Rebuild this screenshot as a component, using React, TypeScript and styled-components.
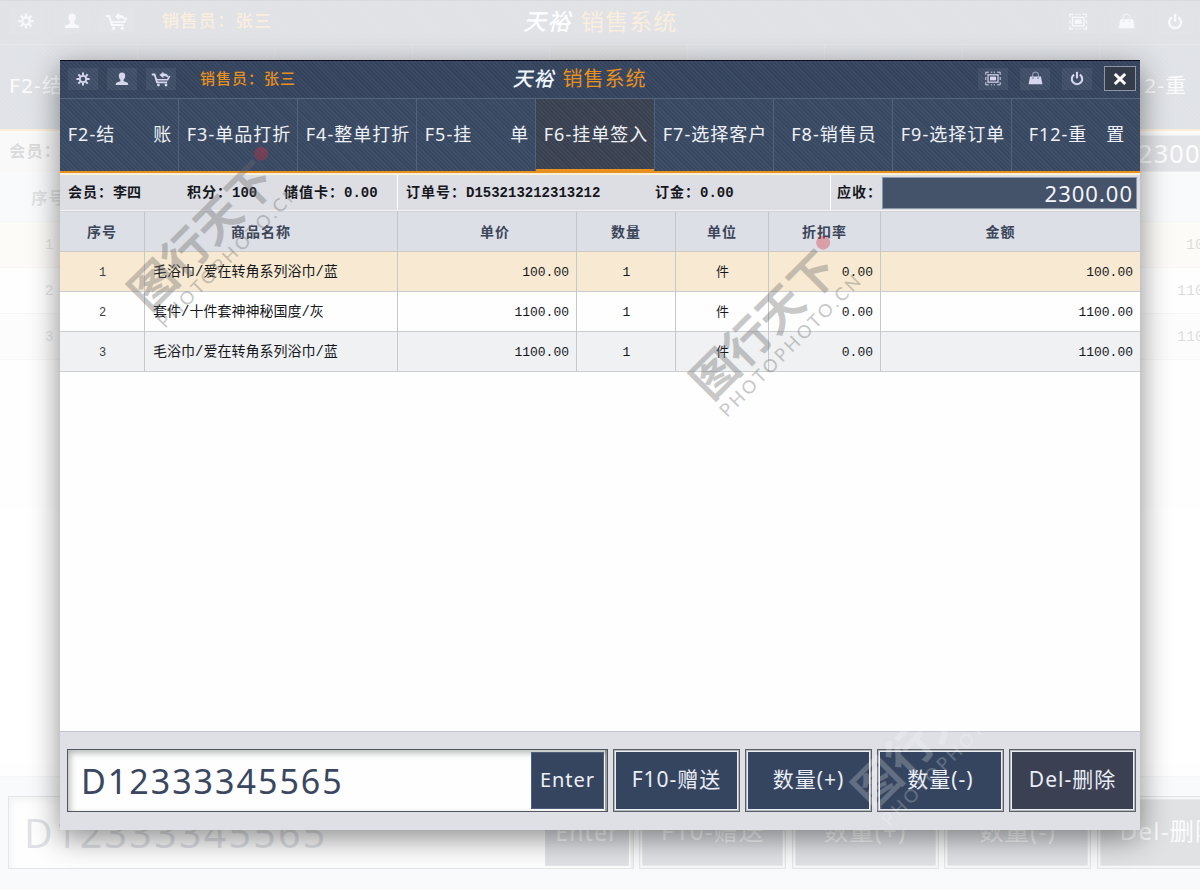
import React, { useId } from 'react';
import styled, { createGlobalStyle, css } from 'styled-components';

const navy = '#36455f';
const orange = '#e8901e';
const sans = `"Noto Sans", "Noto Sans CJK SC", sans-serif`;
const mono = `"Liberation Mono", "Noto Sans CJK SC", monospace`;

const weave = css`
  background-image: repeating-linear-gradient(
    45deg,
    rgba(255, 255, 255, 0.03) 0 1px,
    rgba(0, 0, 0, 0.04) 2px 3px
  );
`;

const GlobalStyle = createGlobalStyle`
  *, *::before, *::after { box-sizing: border-box; }
  body { margin: 0; background: #fff; font-family: ${sans}; overflow: hidden; }
  button, input { font-family: inherit; margin: 0; }
`;

const Stage = styled.main`
  position: relative;
  min-height: 100vh;
  padding: 60px;
  overflow: hidden;
  display: flex;
`;

const Backdrop = styled.div`
  position: absolute;
  inset: 0 auto 0 0;
  width: 104%;
  display: flex;
  opacity: 0.15;
`;

const Front = styled.div`
  position: relative;
  flex: 1;
  min-width: 0;
  display: flex;
  box-shadow: 0 8px 28px rgba(0, 0, 0, 0.46);
`;

const Shell = styled.section<{ $zoom: number }>`
  zoom: ${(p) => p.$zoom};
  flex: 1;
  min-width: 0;
  display: flex;
  flex-direction: column;
  background: #fefefe;
`;

const TopBar = styled.header`
  ${weave}
  background-color: ${navy};
  border-top: 1px solid #0b0f18;
  height: 38px;
  display: flex;
  align-items: center;
  padding: 0 4px 2px 8px;
`;

const TopLeft = styled.div`
  flex: 0 0 42%;
  margin-right: -4px;
  display: flex;
  align-items: center;
  gap: 9px;
`;

const TopRight = styled.div`
  margin-left: auto;
  display: flex;
  align-items: center;
  gap: 12px;
`;

const IconButton = styled.button`
  width: 30px;
  height: 22px;
  padding: 0;
  border: 0;
  display: grid;
  place-items: center;
  color: #d6d6ee;
  background: rgba(255, 255, 255, 0.06);
`;

const CloseButton = styled(IconButton)`
  width: 32px;
  height: 25px;
  color: #fff;
  background: #343b49;
  border: 1px solid #8e95a3;
`;

const Seller = styled.span`
  margin-left: 15px;
  color: ${orange};
  font-size: 15px;
  font-weight: 500;
  letter-spacing: 1px;
  line-height: 20px;
  padding-bottom: 2px;
`;

const Title = styled.h1`
  margin: 0;
  display: flex;
  gap: 8px;
  font-size: 20px;
  line-height: 28px;
  font-weight: 400;
  letter-spacing: 1px;
  color: ${orange};
`;

const Brand = styled.span`
  color: #eef6ff;
  font-style: italic;
  font-weight: 500;
`;

const Tabs = styled.nav`
  ${weave}
  background-color: #3a4a64;
  display: grid;
  grid-template-columns: repeat(8, 119fr) 128fr;
  height: 75px;
  border-top: 1px solid #56657f;
  border-bottom: 2px solid ${orange};
`;

const Tab = styled.button<{ $active?: boolean }>`
  min-width: 0;
  border: 0;
  border-right: 1px solid #53627c;
  padding: 0 0 4px 2px;
  background: transparent;
  color: #eef1f6;
  font-size: 18px;
  letter-spacing: 1px;
  white-space: pre;
  &:last-child {
    border-right: 0;
  }
  ${(p) =>
    p.$active &&
    css`
      ${weave}
      background-color: #3b4252;
      box-shadow: inset 0 -2px ${orange};
    `}
`;

const InfoBar = styled.div`
  display: flex;
  height: 38px;
  border-top: 2px solid #fbf0d8;
  border-bottom: 1px solid #f4f4f6;
  background: #dddee4;
  font-family: ${mono};
  font-size: 14px;
  font-weight: 700;
  line-height: 20px;
  color: #15171c;
`;

const InfoGroup = styled.dl<{ $width?: number }>`
  margin: 0;
  padding: 1px 0 0 8px;
  flex: ${(p) => (p.$width ? `0 0 ${p.$width}px` : '1')};
  display: flex;
  align-items: center;
  border-right: 1px solid #fff;
`;

const Field = styled.div<{ $width?: number }>`
  display: flex;
  white-space: nowrap;
  width: ${(p) => (p.$width ? `${p.$width}px` : 'auto')};
  dt {
    letter-spacing: 1px;
  }
  dd {
    margin: 0;
  }
`;

const Due = styled.div`
  flex: 0 0 309px;
  display: flex;
  align-items: center;
  padding: 0 3px 0 6px;
  letter-spacing: 1px;
  label {
    flex: 0 0 42px;
    white-space: nowrap;
  }
  output {
    flex: 1;
    margin-top: 1px;
    height: 32px;
    padding-right: 3px;
    border: 1px solid #8d96a7;
    background: #44526a;
    color: #f3f5f9;
    text-align: right;
    font-family: ${sans};
    font-size: 22px;
    font-weight: 400;
    line-height: 30px;
  }
`;

const Body = styled.div`
  flex: 1;
`;

const Table = styled.table`
  width: 100%;
  table-layout: fixed;
  border-collapse: separate;
  border-spacing: 0;
  font-family: ${mono};
  color: #16181c;
`;

const Th = styled.th<{ $shift?: 'left' | 'right' }>`
  height: 41px;
  padding: 0 ${(p) => (p.$shift === 'left' ? 20 : 0)}px 1px
    ${(p) => (p.$shift === 'right' ? 16 : 0)}px;
  background: #dddfe6;
  border-right: 1px solid #c3c5cb;
  border-bottom: 1px solid #cdc9c4;
  border-top: 1px solid #d0d2d8;
  font-size: 14px;
  letter-spacing: 1px;
  color: #3b4559;
  &:last-child {
    border-right: 0;
  }
`;

const rowColours = ['#f8ead2', '#fefefe', '#eff1f3'];

const Row = styled.tr<{ $tone: number }>`
  background: ${(p) => rowColours[p.$tone]};
`;

const Td = styled.td<{ $align?: string }>`
  height: 40px;
  padding: 2px 7px 0 8px;
  border-right: 1px solid #c6c8cb;
  border-bottom: 1px solid #cccdd0;
  font-size: 13px;
  line-height: 20px;
  text-align: ${(p) => p.$align ?? 'center'};
  &:first-child {
    font-size: 12px;
    color: #3c3f45;
  }
  &:nth-child(2) {
    padding-top: 0;
    font-size: 14px;
  }
  &:last-child {
    border-right: 0;
  }
`;

const Footer = styled.footer`
  display: flex;
  gap: 5px;
  padding: 17px 4px 18px 7px;
  border-top: 1px solid #c3c6cb;
  background: #dee0e6;
`;

const Search = styled.form`
  flex: 1;
  min-width: 0;
  height: 63px;
  display: flex;
  padding: 2px;
  border: 1px solid #4f565e;
  background: #fefefe;
  box-shadow: inset 2px 3px 6px rgba(70, 80, 80, 0.4), inset -2px 0 0 #a3a8ad;
`;

const CodeInput = styled.input`
  flex: 1;
  min-width: 0;
  border: 0;
  outline: 0;
  padding: 0 0 0 11px;
  background: transparent;
  color: #3a475e;
  font-size: 34px;
  letter-spacing: 2px;
`;

const EnterButton = styled.button`
  width: 73px;
  margin-right: 1px;
  padding: 0 0 2px;
  border: 1px solid #51607a;
  background: ${navy};
  color: #eef1f6;
  font-size: 20px;
  letter-spacing: 1px;
`;

const ActionButton = styled.button<{ $dark?: boolean }>`
  width: 127px;
  height: 63px;
  padding: 0 0 6px;
  border: 1px solid #5a6068;
  box-shadow: inset 0 0 0 1px #b4b8be, inset 0 0 0 2px #eceef1;
  background: ${(p) => (p.$dark ? '#3b4152' : navy)};
  color: #e9edf5;
  font-size: 21px;
  letter-spacing: 1px;
  white-space: nowrap;
`;

const MarkLayer = styled.svg`
  position: absolute;
  inset: 0;
  width: 100%;
  height: 100%;
  pointer-events: none;
`;

const GearIcon = () => (
  <svg width="14" height="14" viewBox="0 0 14 14" fill="none" stroke="currentColor">
    <circle cx="7" cy="7" r="3.2" strokeWidth="1.8" />
    {[0, 45, 90, 135, 180, 225, 270, 315].map((a) => (
      <path key={a} d="M7 0.4V3" strokeWidth="2" transform={`rotate(${a} 7 7)`} />
    ))}
  </svg>
);

const UserIcon = () => (
  <svg width="14" height="14" viewBox="0 0 14 14" fill="currentColor">
    <path d="M7 0.5C9.3 0.5 10.4 2 10.2 4.2C10.1 5.8 9.4 6.9 8.6 7.7V9.2L12.2 10.6C13 11 13.2 11.9 13.2 13H0.8C0.8 11.9 1 11 1.8 10.6L5.4 9.2V7.7C4.6 6.9 3.9 5.8 3.8 4.2C3.6 2 4.7 0.5 7 0.5Z" />
  </svg>
);

const CartIcon = () => (
  <svg width="20" height="16" viewBox="0 0 20 16" fill="none" stroke="currentColor">
    <path d="M0.8 3.5H3.6L6 11.3H16.2" strokeWidth="1.8" />
    <path d="M5.2 7.2L5.8 8.8H16.6L18.6 4.8" strokeWidth="1.6" />
    <path d="M8.4 4L12.4 0.8V2.6C15.4 2.4 17.4 3.6 17.2 7.2C16.4 5.8 15 5.2 12.4 5.3V7.2Z" fill="currentColor" stroke="none" />
    <circle cx="7.4" cy="14" r="1.4" fill="currentColor" stroke="none" />
    <circle cx="15" cy="14" r="1.4" fill="currentColor" stroke="none" />
  </svg>
);

const ScreenIcon = () => (
  <svg width="16" height="15" viewBox="0 0 16 15" fill="none" stroke="currentColor">
    <path d="M0.8 3.8V1.2H3.8M12.2 1.2H15.2V3.8M15.2 11.2V13.8H12.2M3.8 13.8H0.8V11.2M6 1.2H7.2M8.8 1.2H10M6 13.8H7.2M8.8 13.8H10M0.8 6V9M15.2 6V9" strokeWidth="1" />
    <rect x="3" y="3.8" width="10" height="7.4" strokeWidth="1.2" />
    <rect x="5" y="5.6" width="6" height="3.8" fill="currentColor" stroke="none" />
  </svg>
);

const BagIcon = () => (
  <svg width="15" height="15" viewBox="0 0 15 15" fill="none" stroke="currentColor">
    <path d="M4.6 6V3.8C4.6 0.2 10.4 0.2 10.4 3.8V6" strokeWidth="1.2" opacity="0.55" />
    <path d="M2 5.4H13L14.4 13.2H0.6Z" fill="currentColor" stroke="none" />
    <path d="M4.4 7.2H5.6M9.4 7.2H10.6" stroke="#4b5875" strokeWidth="1.2" />
  </svg>
);

const PowerIcon = () => (
  <svg width="14" height="15" viewBox="0 0 14 15" fill="none" stroke="currentColor" strokeWidth="2.1">
    <path d="M4.2 3.6A5.2 5.2 0 1 0 9.8 3.6" />
    <path d="M7 0.8V7.4" />
  </svg>
);

const CloseIcon = () => (
  <svg width="14" height="12" viewBox="0 0 14 12" fill="none" stroke="currentColor" strokeWidth="3">
    <path d="M1.8 1L12.2 11M12.2 1L1.8 11" />
  </svg>
);

const tabs = [
  'F2-结\u3000\u3000账',
  'F3-单品打折',
  'F4-整单打折',
  'F5-挂\u3000\u3000单',
  'F6-挂单签入',
  'F7-选择客户',
  'F8-销售员',
  'F9-选择订单',
  'F12-重\u3000置',
];

type Column = { label: string; width?: number; shift?: 'left' | 'right' };

const columns: Column[] = [
  { label: '序号', width: 85 },
  { label: '商品名称', width: 253, shift: 'left' },
  { label: '单价', width: 179, shift: 'right' },
  { label: '数量', width: 99 },
  { label: '单位', width: 93 },
  { label: '折扣率', width: 112 },
  { label: '金额', shift: 'left' },
];

const rows = [
  ['1', '毛浴巾/爱在转角系列浴巾/蓝', '100.00', '1', '件', '0.00', '100.00'],
  ['2', '套件/十件套神神秘国度/灰', '1100.00', '1', '件', '0.00', '1100.00'],
  ['3', '毛浴巾/爱在转角系列浴巾/蓝', '1100.00', '1', '件', '0.00', '1100.00'],
];

const aligns = ['center', 'left', 'right', 'center', 'center', 'right', 'right'];

function SalesWindow({ zoom = 1 }: { zoom?: number }) {
  const id = useId();
  return (
    <Shell $zoom={zoom}>
      <TopBar>
        <TopLeft>
          <IconButton aria-label="设置"><GearIcon /></IconButton>
          <IconButton aria-label="用户"><UserIcon /></IconButton>
          <IconButton aria-label="退货"><CartIcon /></IconButton>
          <Seller>销售员：张三</Seller>
        </TopLeft>
        <Title>
          <Brand>天裕</Brand>
          <span>销售系统</span>
        </Title>
        <TopRight>
          <IconButton aria-label="全屏"><ScreenIcon /></IconButton>
          <IconButton aria-label="锁定"><BagIcon /></IconButton>
          <IconButton aria-label="电源"><PowerIcon /></IconButton>
          <CloseButton aria-label="关闭"><CloseIcon /></CloseButton>
        </TopRight>
      </TopBar>

      <Tabs>
        {tabs.map((t) => (
          <Tab key={t} $active={t.startsWith('F6')}>{t}</Tab>
        ))}
      </Tabs>

      <InfoBar>
        <InfoGroup $width={338}>
          <Field $width={119}><dt>会员：</dt><dd>李四</dd></Field>
          <Field $width={97}><dt>积分：</dt><dd>100</dd></Field>
          <Field><dt>储值卡：</dt><dd>0.00</dd></Field>
        </InfoGroup>
        <InfoGroup>
          <Field $width={249}><dt>订单号：</dt><dd>D153213212313212</dd></Field>
          <Field><dt>订金：</dt><dd>0.00</dd></Field>
        </InfoGroup>
        <Due>
          <label htmlFor={`${id}-due`}>应收：</label>
          <output id={`${id}-due`}>2300.00</output>
        </Due>
      </InfoBar>

      <Body>
        <Table>
          <colgroup>
            {columns.map((c) => <col key={c.label} width={c.width} />)}
          </colgroup>
          <thead>
            <tr>
              {columns.map((c) => (
                <Th key={c.label} scope="col" $shift={c.shift}>{c.label}</Th>
              ))}
            </tr>
          </thead>
          <tbody>
            {rows.map((r, i) => (
              <Row key={r[0]} $tone={i}>
                {r.map((cell, j) => <Td key={j} $align={aligns[j]}>{cell}</Td>)}
              </Row>
            ))}
          </tbody>
        </Table>
      </Body>

      <Footer>
        <Search onSubmit={(e) => e.preventDefault()}>
          <CodeInput aria-label="条码" defaultValue="D12333345565" />
          <EnterButton type="submit">Enter</EnterButton>
        </Search>
        <ActionButton>F10-赠送</ActionButton>
        <ActionButton>数量(+)</ActionButton>
        <ActionButton>数量(-)</ActionButton>
        <ActionButton $dark>Del-删除</ActionButton>
      </Footer>
    </Shell>
  );
}

function Watermark({ x, y, light }: { x: number; y: number; light?: boolean }) {
  return (
    <g
      transform={`translate(${x} ${y}) rotate(-45)`}
      fill={light ? '#ffffff' : '#6a6a6a'}
      opacity={light ? 0.22 : 0.36}
    >
      <text y="-23" fontSize="46" fontWeight="700" fontFamily="Noto Sans CJK SC, sans-serif">图行天下</text>
      <text fontSize="18" letterSpacing="3" fontFamily="Lato, sans-serif">PHOTOPHOTO.CN</text>
      <circle cx="192" cy="-56" r="7" fill={light ? '#ffffff' : '#d03040'} />
    </g>
  );
}

export default function App() {
  return (
    <>
      <GlobalStyle />
      <Stage>
        <Backdrop aria-hidden inert>
          <SalesWindow zoom={1.155} />
        </Backdrop>
        <Front>
          <SalesWindow />
          <MarkLayer aria-hidden>
            <Watermark x={105} y={269} />
            <Watermark x={667} y={358} />
            <Watermark x={829} y={767} light />
          </MarkLayer>
        </Front>
      </Stage>
    </>
  );
}
